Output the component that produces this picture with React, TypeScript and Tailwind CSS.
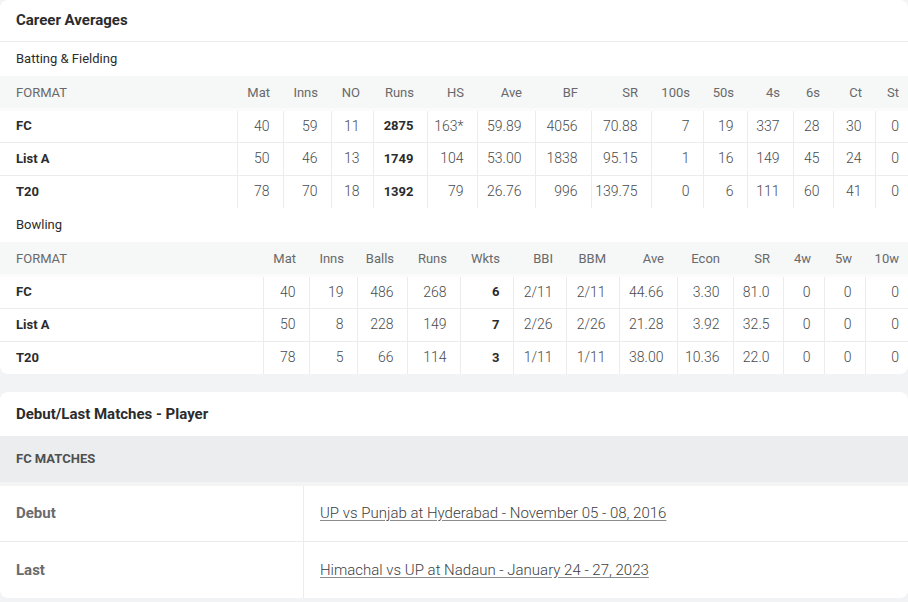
import React from 'react';

type Col = { label: string; w: number; bold?: boolean };

const battingCols: Col[] = [
  { label: 'Mat', w: 46 },
  { label: 'Inns', w: 48 },
  { label: 'NO', w: 42 },
  { label: 'Runs', w: 54, bold: true },
  { label: 'HS', w: 50 },
  { label: 'Ave', w: 58 },
  { label: 'BF', w: 56 },
  { label: 'SR', w: 60 },
  { label: '100s', w: 52 },
  { label: '50s', w: 44 },
  { label: '4s', w: 46 },
  { label: '6s', w: 40 },
  { label: 'Ct', w: 42 },
  { label: 'St', w: 37 },
];

const battingRows = [
  ['FC', '40', '59', '11', '2875', '163*', '59.89', '4056', '70.88', '7', '19', '337', '28', '30', '0'],
  ['List A', '50', '46', '13', '1749', '104', '53.00', '1838', '95.15', '1', '16', '149', '45', '24', '0'],
  ['T20', '78', '70', '18', '1392', '79', '26.76', '996', '139.75', '0', '6', '111', '60', '41', '0'],
];

const bowlingCols: Col[] = [
  { label: 'Mat', w: 46 },
  { label: 'Inns', w: 48 },
  { label: 'Balls', w: 50 },
  { label: 'Runs', w: 53 },
  { label: 'Wkts', w: 53, bold: true },
  { label: 'BBI', w: 53 },
  { label: 'BBM', w: 53 },
  { label: 'Ave', w: 58 },
  { label: 'Econ', w: 56 },
  { label: 'SR', w: 50 },
  { label: '4w', w: 41 },
  { label: '5w', w: 41 },
  { label: '10w', w: 47 },
];

const bowlingRows = [
  ['FC', '40', '19', '486', '268', '6', '2/11', '2/11', '44.66', '3.30', '81.0', '0', '0', '0'],
  ['List A', '50', '8', '228', '149', '7', '2/26', '2/26', '21.28', '3.92', '32.5', '0', '0', '0'],
  ['T20', '78', '5', '66', '114', '3', '1/11', '1/11', '38.00', '10.36', '22.0', '0', '0', '0'],
];

function StatsTable({ firstW, cols, rows }: { firstW: number; cols: Col[]; rows: string[][] }) {
  const total = firstW + cols.reduce((s, c) => s + c.w, 0);
  return (
    <table className="table-fixed border-collapse text-[14px]" style={{ width: total }}>
      <colgroup>
        <col style={{ width: firstW }} />
        {cols.map(c => (
          <col key={c.label} style={{ width: c.w }} />
        ))}
      </colgroup>
      <thead>
        <tr className="h-[33px] bg-[#f6f7f7] border-b-[3px] border-[#fbfbfb] text-[13px] text-[#68696a]">
          <th className="pl-4 pt-px text-left font-normal">FORMAT</th>
          {cols.map(c => (
            <th key={c.label} className="pr-[13px] pt-px text-right font-normal">
              {c.label}
            </th>
          ))}
        </tr>
      </thead>
      <tbody>
        {rows.map((r, i) => (
          <tr key={r[0]} className={`h-[33px] ${i < rows.length - 1 ? 'border-b border-[#ececec]' : ''}`}>
            <td className="pl-4 text-left text-[13px] font-bold text-[#2b2c2d] border-r border-[#ececec]">{r[0]}</td>
            {cols.map((c, j) => (
              <td
                key={c.label}
                className={`pr-[13px] text-right border-r border-[#ececec] last:border-r-0 ${
                  c.bold ? 'text-[13px] font-bold text-[#2b2c2d]' : 'font-light text-[#4a4b4c]'
                }`}
              >
                {r[j + 1]}
              </td>
            ))}
          </tr>
        ))}
      </tbody>
    </table>
  );
}

export default function App() {
  return (
    <div className="w-[908px] h-[602px] overflow-hidden bg-[#f2f3f4] font-['Roboto',_'Liberation_Sans',_sans-serif]">
      {/* Career averages */}
      <section className="bg-white rounded-lg overflow-hidden">
        <h2 className="h-[42px] flex items-center px-4 text-[15px] font-bold text-[#2b2c2d] border-b border-[#ededed]">
          Career Averages
        </h2>
        <h3 className="h-[34px] flex items-center px-4 text-[13px] text-[#2b2c2d]">Batting &amp; Fielding</h3>
        <StatsTable firstW={237} cols={battingCols} rows={battingRows} />
        <h3 className="h-[34px] flex items-center px-4 text-[13px] text-[#2b2c2d]">Bowling</h3>
        <StatsTable firstW={263} cols={bowlingCols} rows={bowlingRows} />
      </section>

      {/* Debut / last matches */}
      <section className="mt-[18px] bg-white rounded-lg overflow-hidden">
        <h2 className="h-[44px] flex items-center px-4 text-[15px] font-bold text-[#2b2c2d]">
          Debut/Last Matches - Player
        </h2>
        <div className="h-[50px] flex items-center px-4 bg-[#ecedee] border-b-4 border-[#f3f4f4] text-[13px] font-bold uppercase text-[#4f5051]">
          FC Matches
        </div>
        <div className="grid grid-cols-[304px_1fr] text-[15px]">
          <div className="h-[56px] flex items-center px-4 font-bold text-[#6a6b6c] border-r border-b border-[#ececec]">
            Debut
          </div>
          <div className="h-[56px] flex items-center px-4 border-b border-[#ececec]">
            <a className="font-light text-[#3d3e3f] underline decoration-[#8a8b8c] underline-offset-2 cursor-pointer">
              UP vs Punjab at Hyderabad - November 05 - 08, 2016
            </a>
          </div>
          <div className="h-[56px] flex items-center px-4 font-bold text-[#6a6b6c] border-r border-[#ececec]">
            Last
          </div>
          <div className="h-[56px] flex items-center px-4">
            <a className="font-light text-[#3d3e3f] underline decoration-[#8a8b8c] underline-offset-2 cursor-pointer">
              Himachal vs UP at Nadaun - January 24 - 27, 2023
            </a>
          </div>
        </div>
      </section>
    </div>
  );
}
